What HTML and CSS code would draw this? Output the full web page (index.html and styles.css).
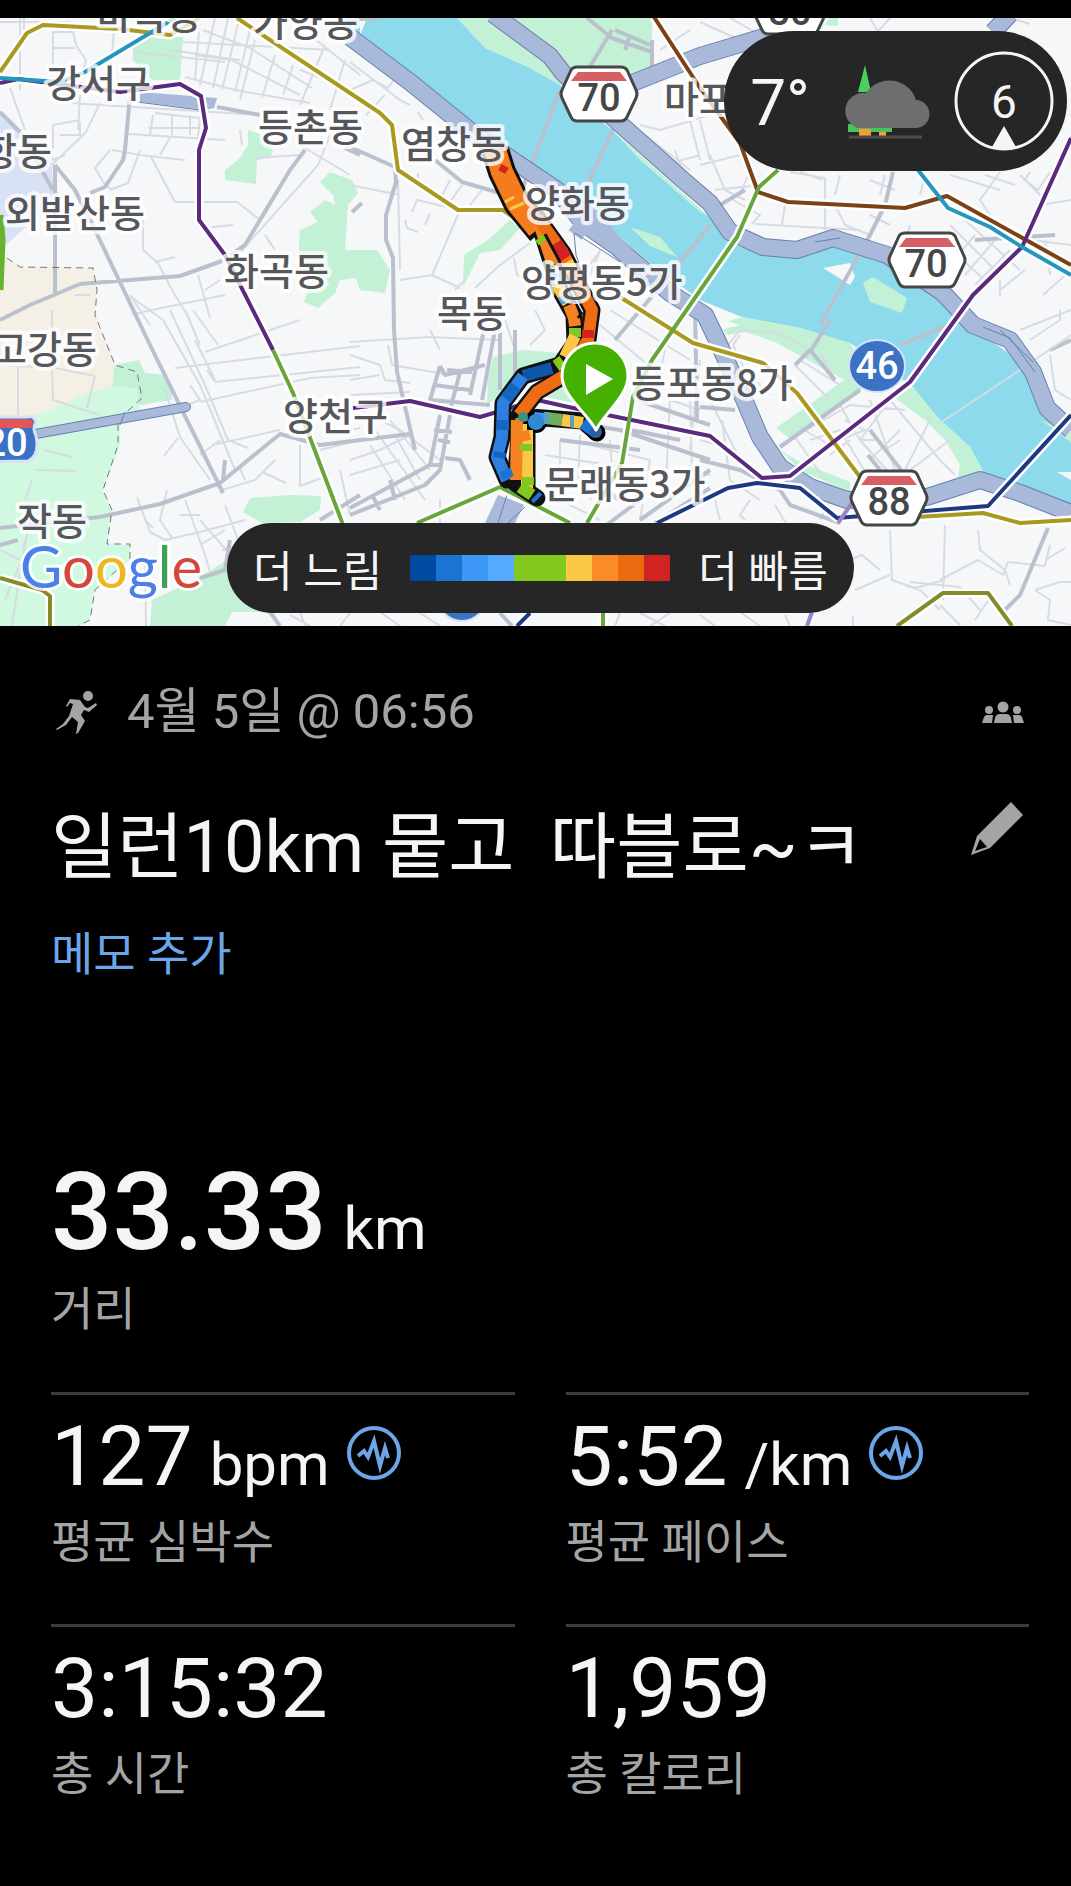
FILE: index.html
```html
<!DOCTYPE html>
<html lang="ko">
<head>
    <meta charset="UTF-8">
    <meta name="viewport" content="width=device-width, initial-scale=1.0">
    <title>일런10km</title>
    <link rel="stylesheet" href="styles.css">
</head>
<body>
    <div class="map">
        <svg class="map-canvas" viewBox="0 18 1071 608" role="img" aria-label="지도">
            <!-- land use -->
            <g class="park">
                <path d="M457 18H652V68L637 80L612 100L560 85L530 68L485 48Z"/>
                <path d="M133 37H183L180 80L152 80L133 60Z"/>
                <path d="M248 130L262 135L273 150L270 158L257 160L256 184L225 180V170L240 158L248 145Z"/>
                <path d="M330 172L352 180L358 193L348 205L345 250H377L390 270L385 293L360 290L356 278L340 280L335 293L318 308L304 302L308 290L330 285L298 260L300 230L318 222L310 212L325 200L335 205L333 195L320 182Z"/>
                <path d="M510 220L521 227L500 250L480 253L463 287L464 255L488 240Z"/>
                <path d="M493 357L523 350L563 353L550 372L520 380L487 405L488 380Z"/>
                <path d="M590 410L556 380L530 395L520 400Z"/>
                <path d="M150 626L152 600L195 580L227 560L240 600L260 612L232 612L225 626Z"/>
                <path d="M243 512L250 498L290 495L321 496L320 510L300 522L262 523Z"/>
                <path d="M115 365L139 360L145 373L165 375L172 390V400L140 405L110 390Z"/>
                <path d="M829 18L838 18L838 26L825 25Z"/>
            </g>
            <path class="town" d="M0 258H7L20 267L93 268L97 290L95 315L115 362L112 388L60 410L0 425Z"/>
            <path class="park-light" d="M0 426L45 412L90 392L113 386L137 388L140 410L120 420V445L103 490L112 510L107 544L130 545L130 560L95 590L90 620L80 626H0Z"/>
            <path class="airport" d="M0 112L25 135L52 163L53 185L60 195L25 228L0 250Z"/>

            <!-- river -->
            <path class="water" d="M367 18H457L485 48L530 68L560 85L612 130L690 200L710 218L730 243L760 255L790 258L847 243L888 262L940 288L967 320L983 335L1007 352L1033 383L1047 420L1071 440V512L1023 490L983 472L970 447L937 417L913 387L850 343L800 328L742 317L700 300L650 263L603 227L570 195L513 157L477 128L357 43Z"/>
            <path class="water" d="M352 30L360 18H350ZM345 18H360L360 40L352 34Z"/>
            <g class="park">
                <path d="M717 325L742 317L800 328L850 343L868 372L850 383L775 342L745 332L728 335Z"/>
                <path d="M913 387L937 417L970 447L983 470L957 480L960 465L945 440L925 420L895 398Z"/>
                <path d="M776 428L850 376L866 386L792 440Z"/>
                <path d="M780 450L800 470L850 492L850 482L800 462Z"/>
                <path d="M630 227L660 237L677 257L650 246Z"/>
                <path d="M863 283L873 277L907 298L902 313L870 302Z"/>
                <path d="M598 217L650 263L668 285L640 268L612 243Z"/>
                <path d="M612 130L690 200L708 216L700 212L640 160Z"/>
                <path d="M1040 420L1055 430L1071 443V432Z"/>
            </g>
            <path class="land" d="M823 268L850 263L855 277L850 285ZM1057 472H1071V480ZM700 313L740 325L720 330Z"/>

            <!-- streets -->
            <path class="street" d="M0 22H70M20 18V90M24 18V40M53 32H73L76 45L86 60L84 68M53 32V72M53 48H75M115 20L110 75M135 52L225 62M183 42L330 50M185 77L235 90L310 103M200 18L195 80M215 18L200 85M228 18L213 88M238 24L222 90M250 30L235 92M203 30L250 48L312 88M195 55L232 60L300 95M170 50L240 60M255 40L240 100M275 55L262 98M293 65L283 95M325 45L300 105M345 60L330 110M316 40L360 75M300 70L340 85M10 88L25 130M70 103L260 115M80 95L78 130M100 103L86 132L52 165M53 125L80 120M53 125V160L65 155M60 135H80V122M128 134L225 140M153 115L150 135M155 113L200 118L198 138M172 115V135M190 115V135M148 128H200M170 138L160 155M150 155L175 202L237 202L260 220M140 150L128 183L110 190M110 150L95 168L105 185L113 190M112 150L140 155L185 160M240 130L242 145M330 135L318 165L235 258M300 145L350 175M255 158L300 155M143 220V250L158 263L172 290L190 320M155 262L175 257M212 227L233 225M265 235L275 250M198 275L210 318M130 295L150 325M132 314L225 295M205 290L220 280M55 280V290M75 295H90"/>
            <path class="street" d="M0 365L55 368L95 376M18 365V420M52 370L53 400L100 415M52 310V368M44 450L72 457M35 470L76 471M95 376L87 408M130 296L163 320L200 385L235 470M170 310L205 385L228 440L248 448M193 310L218 345M185 310L200 345M205 352L300 320M175 368L360 346M207 370L215 382L360 367M200 402L310 378L360 375M195 340L215 380M212 445L280 430M165 390L180 437L210 480M178 438L164 456M200 455L220 440M300 445V486L330 475M222 490L255 480L275 460M245 480L240 468M262 472L286 483M137 497L150 532L165 540L200 532L245 520M180 515L200 515M167 490L160 520L172 538M185 500L205 555L210 572M200 520L235 560M225 505L240 545L222 550M200 545L225 530M145 520L153 528M25 500L32 480M30 520L22 560L5 600M0 550L20 560M145 560L146 626M12 626L25 540M175 410L200 400L190 385M340 470L350 515M320 450L360 440M328 435L360 428"/>
            <path class="street" d="M350 62L400 100L410 105M350 90L373 80L388 88L395 78M366 115L385 95M418 112L423 120M398 180L400 270M350 185L400 195M412 212L417 200L460 210L432 275L460 288M400 280L432 275M405 220L407 228L418 232M430 213L425 225M440 200L450 180M450 202L462 185M470 205L482 190M418 173V180M475 288L500 265L530 243M600 252L585 270M600 250L590 275M455 290L465 280M514 258L517 275L530 280M350 342L430 337L500 340M350 355L380 365L385 380L410 383M350 380L380 375M430 330L440 350M350 395L410 392M388 345L392 365L450 375M360 410L400 430L440 460M370 445L405 500M395 435L420 480M350 475L400 460M375 430L425 500M440 500V523M350 460L380 450L410 435M390 420L430 470M535 310L545 330L530 345M505 320L515 350M575 335V355M600 325L660 375M610 310L690 360M650 360L630 400M665 350L655 395M700 360L690 450M590 445L650 460L640 520M580 435L578 480M560 440L560 480L620 500M545 455L640 470M600 470L590 500M610 440L612 470M640 430L680 440M655 395L700 410M670 400L665 500M690 390L692 470L710 475M620 430L710 460M560 500L600 520"/>
            <path class="street" d="M660 50L690 30M640 125L660 130L710 115M645 135L690 170M665 165L700 155M690 120L700 160M675 150L685 180M650 140L700 185M700 120L710 160M710 155L725 190L745 200M700 165L740 155M733 200L760 215L752 224M715 190L760 185M748 175L740 195M790 172L825 178L825 230M800 172L823 180M840 175L835 195M755 224L860 230M785 205L782 225M835 205L845 225L870 235M870 180L895 190M885 175L880 195M870 215L890 225M910 225L905 245M925 175L920 195M1000 172L980 200L1000 230M1020 175L1045 200M985 175L1015 185M950 175L1000 190M1030 172L1025 180L1038 190L1050 172M1060 155L1071 150M1040 205L1071 200M950 225L1000 275M965 220L1020 270M940 240L985 280M975 235L950 265M995 240L965 275M1010 250L975 285M1000 280V296M1025 270L1000 290M1043 295L1071 270M1030 240L1071 245M1045 240L1050 275M1020 330L1071 310M1030 340L1060 320V310M1050 355L1055 390L1071 400M870 18L880 35M890 18L870 40M740 40L700 22M730 18L760 35M1010 18L1030 24"/>
            <path class="street" d="M728 345L740 330L780 333L810 350M740 335L733 345L745 370L770 395M795 365L830 400M800 360L840 385M820 352L835 380M780 445L850 405L905 410M795 425L830 445L790 470M790 430L825 480M810 440L840 430L870 480M840 405L860 440L900 485M870 400L895 470M890 400L940 460L955 475M905 380L860 440L875 440M830 455L850 440M885 450L900 440M930 420L890 500M950 440L910 470M900 430L870 460M845 420L865 430L840 440L850 430M710 400L730 440L745 470M700 440L735 450M700 460L740 470M722 420L730 480L760 500M775 505L790 530M830 500L820 520M715 500L720 520M750 500L740 515L745 520M890 530L892 580L915 588L945 580M945 525L943 600M978 530L980 550L1005 570L1010 585M905 585L920 590L940 610M910 582L960 587L980 610M940 580L978 560L1003 575L1008 562L1045 566L1050 545M1035 590L1060 582H1071M1035 590L1050 600L1048 620L1071 625M850 560L862 555L880 570M855 590L890 575M700 615L715 626M740 612L760 626M785 615L790 626M853 616V626M380 612L400 626M420 613L440 626M620 613L615 626M640 613L665 626M650 626L670 613M290 615L310 626M300 612L305 626M350 613L340 626M940 605L960 625M990 598L975 620M1045 560L1065 548"/>
            <path class="avenue" d="M352 212L362 203M130 97L125 150L123 160L105 187L90 193M0 112L20 132L53 190M55 165V295M55 165L75 190L95 230L150 345L223 493M0 320L30 305L80 284L180 276L222 261M222 261L245 245L290 170L305 150M217 107L260 115M350 147L395 167L396 182L386 215V240L393 258L394 330L397 372L415 450M397 180L392 195M435 160L462 182L500 193M0 528L100 517L160 504L220 483L280 434L320 445L410 434M225 460L223 480M200 578L225 570L230 540M345 148L360 155M320 520L360 495M0 545L18 540M440 366L445 375L485 365M440 366L430 400L490 405M447 370L472 372M435 385L470 390M484 330L470 395M495 330L482 400M460 372L450 410M440 415L430 465L350 508M450 415L440 470L425 485L350 515M430 465H442M445 458L460 460L470 480M372 495L380 510M390 480L395 500M438 440L450 442M434 430L452 432M500 330V390M515 330V400M345 20L380 18M587 18L612 38L652 52M585 75L612 30M615 30L650 45M630 35L625 50M652 40V75M560 90L520 195M615 125L585 190M710 225L670 275L615 340M670 275L640 290M637 400L710 425M555 420L620 430L710 460M630 430L680 440M560 440L640 450M893 172L885 205L870 235L820 325M640 520L710 470M655 523L710 488M600 530L640 500M695 310L697 420M620 500L590 480M1048 528L1020 595L1005 610M965 318L900 345M810 350L835 380M780 447L860 390M870 430L905 475M868 455L880 470M830 320L810 352M810 350L795 365M700 407L735 410M700 460L740 470L780 490L790 505L840 523M1071 340L1050 350M720 205L745 190M975 240L1055 235M270 612L280 626M500 613L512 626"/>
            <path class="street" d="M937 425L1020 370L1071 335"/>
            <path class="bound" d="M7 258L20 267L93 268L97 290L95 315L105 340L115 365L137 372L142 398L118 420V445L103 490L112 510L107 544H130V558L95 590L90 620L78 626"/>

            <!-- motorways -->
            <path class="motor-edge" d="M350 37L410 82L473 133L517 163L557 190L583 223L617 247L670 293L705 315L717 340L743 397L760 437L780 467L810 487L847 500L927 497L980 480L1020 493L1071 513"/>
            <path class="motor" d="M350 37L410 82L473 133L517 163L557 190L583 223L617 247L670 293L705 315L717 340L743 397L760 437L780 467L810 487L847 500L927 497L980 480L1020 493L1071 513"/>
            <path class="motor-edge" d="M493 14L550 56L563 73L627 130L683 180L710 203L730 232L763 247L797 250L833 238L887 255L943 293L973 325L1010 340L1033 372L1047 408L1071 430"/>
            <path class="motor" d="M493 14L550 56L563 73L627 130L683 180L710 203L730 232L763 247L797 250L833 238L887 255L943 293L973 325L1010 340L1033 372L1047 408L1071 430"/>
            <path class="motor" d="M557 192L590 215L615 243L650 280M575 235L590 215"/>
            <path class="motor-line" d="M574 233L576 255L583 275M815 242L840 238M983 327L1010 338L1035 372M1000 330L1033 362M575 233L617 260L650 282"/>
            <path class="motor-edge" d="M625 86L700 56L780 32M993 32L1010 14"/>
            <path class="motor" d="M625 86L700 56L780 32M993 32L1010 14"/>
            <path class="motor-edge thin" d="M30 435L186 407"/>
            <path class="motor thin" d="M30 435L186 407"/>
            <path class="motor-line" d="M125 412L120 425"/>
            <path class="motor-fill" d="M140 92L205 97L217 98L214 108L205 110L140 102Z"/>
            <path class="motor-fill" d="M498 495L485 523H515L524 505L512 500Z"/>
            <path class="motor-line" d="M507 495L498 523M525 507L508 523M137 102L200 110"/>

            <!-- subway -->
            <g class="casing">
                <path d="M0 72L27 33L43 25L120 29L170 35L200 18M237 18L350 93L380 113L392 125L398 170L458 210H503L545 240M620 297L693 343L763 363L797 393L860 477M900 518L983 513L1020 523L1071 520"/>
                <path d="M0 78L60 82L85 72L175 18M918 170L948 208L990 227L1022 247L1071 275"/>
                <path d="M0 83L18 79L120 92L180 84L201 96L206 128L199 150V220L225 255L273 350L293 393L345 530M353 408L410 401L480 417L537 400L710 436L762 478L790 476L910 382L973 295L1022 247L1071 138"/>
                <path d="M778 170L759 187L737 237L652 360L633 397L622 463L587 523M417 523L500 487L570 523M603 613V626"/>
                <path d="M654 17L700 88L740 143L758 192L788 202L905 208L947 196L1071 265"/>
                <path d="M657 523L728 488L757 483L800 488L837 518L988 506L1071 415M517 626L530 613"/>
                <path d="M0 578L42 590L50 596V626M897 626L943 593H988L1012 626"/>
            </g>
            <g class="subway">
                <path stroke="#a89a20" d="M0 72L27 33L43 25L120 29L170 35L200 18M237 18L350 93L380 113L392 125L398 170L458 210H503L545 240M620 297L693 343L763 363L797 393L860 477M900 518L983 513L1020 523L1071 520"/>
                <path stroke="#7a4216" d="M654 17L700 88L740 143L758 192L788 202L905 208L947 196L1071 265"/>
                <path stroke="#5a2a7d" d="M0 83L18 79L120 92L180 84L201 96L206 128L199 150V220L225 255L273 350M353 408L410 401L480 417L537 400L573 408L710 436L762 478L790 476L910 382L973 295L1022 247L1071 138"/>
                <path stroke="#2596be" d="M0 78L60 82L85 72L175 18M918 170L948 208L990 227L1022 247L1071 275"/>
                <path stroke="#68a63c" d="M273 350L293 393L345 530M778 170L759 187L737 237L652 360L633 397L622 463L587 523M417 523L500 487L570 523M603 613V626"/>
                <path stroke="#1d3a80" d="M657 523L728 488L757 483L800 488L837 518L988 506L1071 415M517 626L530 613"/>
                <path stroke="#858a2a" d="M0 578L42 590L50 596V626M897 626L943 593H988L1012 626"/>
                <path stroke="#9a86c8" d="M852 503L838 523M812 612L807 626"/>
                <path stroke="#68b32e" stroke-width="7" d="M0 215L2 240L0 290"/>
            </g>

            <!-- recorded route -->
            <g class="route">
                <path class="route-edge wide" d="M495 150L502 172L517 203L541 232"/>
                <path class="route-edge" d="M537 217L550 258L560 290L574 315L575 343L560 365L523 376L503 403L502 437L497 457L507 480"/>
                <path class="route-edge" d="M537 217L563 253L580 287L592 310L588 340L567 374L537 392L519 415L518 450L515 483L537 498M527 430L527 490M530 417L583 421L597 433"/>
                <circle cx="536" cy="422" r="11"/>
                <circle cx="596" cy="432" r="9"/>
                <g class="route-line">
                    <path class="wide" stroke="#f47c1c" d="M495 150L502 172L517 203L538 229"/>
                    <path stroke="#f58220" d="M537 217L547 247L553 265"/>
                    <path stroke="#fac846" d="M553 268L560 290L568 303"/>
                    <path stroke="#5aa0d8" d="M554 272L558 284M563 295L567 302"/>
                    <path stroke="#f58220" d="M569 305L574 318L575 326"/>
                    <path stroke="#82c81e" d="M575 328V337M563 361L556 366"/>
                    <path stroke="#fac846" d="M575 336L565 357"/>
                    <path stroke="#0f56a8" d="M552 368L523 376"/>
                    <path stroke="#2e7fe0" d="M523 376L503 403L502 437L497 457L507 480"/>
                    <path stroke="#1566c0" d="M516 386L506 399M503 420V430M500 452L499 458"/>
                    <path stroke="#ee6c14" d="M541 222L563 253L580 287L592 310L588 340L567 374L537 392L519 415"/>
                    <path stroke="#d22222" d="M556 243L566 258M588 330L588 338"/>
                    <path stroke="#fac846" d="M567 262L572 270M527 430L527 490"/>
                    <path stroke="#3c96f5" d="M534 418L545 419"/>
                    <path stroke="#6fae5a" d="M546 418L562 420M521 417L522 422"/>
                    <path stroke="#fac846" d="M562 420L583 423M521 424V430"/>
                    <path stroke="#57a0c0" d="M544 418L549 418M570 421L574 421"/>
                    <path stroke="#f58220" d="M517 420L516 480M523 431L525 441"/>
                    <path stroke="#82c81e" d="M526 444V451M528 477V485M520 487L532 495"/>
                    <path stroke="#1b73d2" d="M583 423L597 433M535 496L538 499M505 470L508 478"/>
                </g>
                <circle cx="536" cy="422" r="8" fill="#2f8ad0"/>
                <circle cx="523" cy="417" r="5" fill="#3f8f8a"/>
                <circle cx="596" cy="432" r="6" fill="#2a5f9c"/>
                <path stroke="#d22222" stroke-width="7" d="M500 167L507 171"/>
                <path stroke="#82c81e" stroke-width="6" d="M537 243L546 236"/>
                <path stroke="#fac846" stroke-width="3" d="M505 202L514 197M510 209L524 203"/>
                <path stroke="#111" stroke-width="3" fill="none" d="M545 234L560 262M578 318L582 312"/>
            </g>

            <!-- place names -->
            <g class="place">
                <text x="97" y="29">마곡동</text>
                <text x="253" y="36">가양동</text>
                <text x="46" y="97">강서구</text>
                <text x="258" y="141">등촌동</text>
                <text x="-18" y="165">항동</text>
                <text x="5" y="227">외발산동</text>
                <text x="224" y="285">화곡동</text>
                <text x="401" y="158">염창동</text>
                <text x="525" y="217">양화동</text>
                <text x="521" y="296">양평동5가</text>
                <text x="437" y="327">목동</text>
                <text x="664" y="113">마포</text>
                <text x="-8" y="363">고강동</text>
                <text x="283" y="430">양천구</text>
                <text x="17" y="535">작동</text>
                <text x="631" y="397">등포동8가</text>
                <text x="544" y="498">문래동3가</text>
            </g>

            <!-- road shields -->
            <defs>
                <g id="hex">
                    <path d="M-22 -27H22Q26 -27 28 -24L37 -4Q39 0 37 4L28 23Q26 27 22 27H-22Q-26 27 -28 23L-37 4Q-39 0 -37 -4L-28 -24Q-26 -27 -22 -27Z" fill="#fff" stroke="#444648" stroke-width="3"/>
                    <path d="M-21 -22H21L28 -13H-28Z" fill="#d65f63"/>
                </g>
            </defs>
            <use href="#hex" x="599" y="94"/>
            <use href="#hex" x="927" y="260"/>
            <use href="#hex" x="889" y="498"/>
            <use href="#hex" x="790" y="7"/>
            <g class="shield-text">
                <text x="599" y="111">70</text>
                <text x="926" y="277">70</text>
                <text x="889" y="515">88</text>
                <text x="790" y="25">30</text>
            </g>
            <ellipse cx="877" cy="366" rx="28" ry="26" fill="#3b72c4" stroke="#d5e3fa" stroke-width="2"/>
            <circle cx="462" cy="597" r="24" fill="#3b72c4" stroke="#d5e3fa" stroke-width="2"/>
            <path d="M-30 417L28 417Q33 415 36 422Q32 428 36 436Q40 455 28 461L-30 462Z" fill="#3b72c4" stroke="#d5e3fa" stroke-width="3"/>
            <path d="M-30 419H27L34 421L31 428H-30Z" fill="#e0585c"/>
            <g class="shield-text light">
                <text x="877" y="379">46</text>
                <text x="6" y="456">20</text>
            </g>

            <!-- start pin -->
            <path d="M596 430C588 414 562 396 562 376A33 33 0 0 1 628 376C628 396 604 414 596 430Z" fill="#46b000" stroke="#fff" stroke-width="3"/>
            <path d="M586 364V395L613 379Z" fill="#fff"/>

            <text class="google" x="20" y="588"><tspan fill="#4a80e8">G</tspan><tspan fill="#d8453a">o</tspan><tspan fill="#efb71f">o</tspan><tspan fill="#4a80e8">g</tspan><tspan fill="#3ea256">l</tspan><tspan fill="#d8453a">e</tspan></text>
        </svg>

        <div class="weather">
            <span class="temp">7°</span>
            <svg class="cloud" viewBox="0 0 90 76" width="90" height="76">
                <path d="M25 0L31 27H18Z" fill="#4bd05f"/>
                <path d="M8 59H52V67H8Z" fill="#4bc35c"/>
                <path d="M19 64H31V71H19ZM39 67H46V71H39Z" fill="#f39c3c"/>
                <path d="M18 63A18 18 0 0 1 26 28A28 28 0 0 1 76 35A14 14 0 0 1 75 63Z" fill="#6e6e6e"/>
                <path d="M9 72H82" stroke="#4c4c4c" stroke-width="3"/>
            </svg>
            <svg class="wind" viewBox="0 0 100 100" width="100" height="100">
                <circle cx="50" cy="50" r="48" fill="none" stroke="#f5f5f5" stroke-width="3"/>
                <path d="M50 75L62 96Q50 101 38 96Z" fill="#f5f5f5"/>
                <text x="50" y="67">6</text>
            </svg>
        </div>

        <div class="legend">
            <span>더 느림</span>
            <div class="scale">
                <i class="s1"></i><i class="s2"></i><i class="s3"></i><i class="s4"></i><i class="s5"></i>
                <i class="s5"></i><i class="s6"></i><i class="s7"></i><i class="s8"></i><i class="s9"></i>
            </div>
            <span>더 빠름</span>
        </div>
    </div>

    <main class="details">
        <div class="meta">
            <svg class="runner" viewBox="0 0 41 43" width="41" height="43">
                <circle cx="32" cy="5" r="5"/>
                <path d="M14 8L24 9L29 16L32 17L40 12L41 14L33 21L28 19L25 24L29 30L22 42L20 43L22 31L16 26L10 34L1 39L0 38L7 33L13 25L17 13L14 12L11 16L10 15Z"/>
            </svg>
            <span class="date">4월 5일 @ 06:56</span>
            <svg class="group" viewBox="0 0 42 22" width="42" height="22">
                <circle cx="21" cy="6" r="5.500"/>
                <circle cx="7" cy="9" r="4"/>
                <circle cx="35" cy="9" r="4"/>
                <path d="M12 22L13 17Q14 13 18 13H24Q28 13 29 17L30 22ZM0 22L2 16Q3 14 5 14H11L10 22ZM42 22L40 16Q39 14 37 14H31L32 22Z"/>
            </svg>
        </div>

        <div class="title-row">
            <h1>일런10km 뭍고&nbsp; 따블로~ㅋ</h1>
            <button type="button" class="edit" aria-label="편집">
                <svg viewBox="0 0 52 54" width="52" height="54">
                    <path d="M40 1L52 14L19 47L0 54L6 35ZM9 38L4 50L16 46Z" fill-rule="evenodd"/>
                </svg>
            </button>
        </div>
        <button type="button" class="memo">메모 추가</button>

        <div class="distance">
            <p class="value big">33.33 <small>km</small></p>
            <p class="label">거리</p>
        </div>

        <div class="stats">
            <div class="stat">
                <p class="value">127 <small>bpm</small>
                    <button type="button" class="wave" aria-label="그래프"><svg viewBox="0 0 54 54" width="54" height="54"><circle cx="27" cy="27" r="25"/><path d="M11 30L17 25L21 31L27 15L33 40L38 22L41 32"/></svg></button>
                </p>
                <p class="label">평균 심박수</p>
            </div>
            <div class="stat">
                <p class="value">5:52 <small>/km</small>
                    <button type="button" class="wave" aria-label="그래프"><svg viewBox="0 0 54 54" width="54" height="54"><circle cx="27" cy="27" r="25"/><path d="M11 30L17 25L21 31L27 15L33 40L38 22L41 32"/></svg></button>
                </p>
                <p class="label">평균 페이스</p>
            </div>
            <div class="stat">
                <p class="value">3:15:32</p>
                <p class="label">총 시간</p>
            </div>
            <div class="stat">
                <p class="value">1,959</p>
                <p class="label">총 칼로리</p>
            </div>
        </div>
    </main>
</body>
</html>
```
FILE: styles.css
```css
* {
    box-sizing: border-box;
}
body {
    margin: 0;
    padding-top: 18px;
    background: #000;
    color: #f5f5f5;
    font-family: Roboto, "Noto Sans CJK KR", sans-serif;
}
h1, p {
    margin: 0;
    font-weight: 400;
}
button {
    padding: 0;
    border: none;
    background: none;
    font: inherit;
    cursor: pointer;
}
svg {
    display: block;
}

/* map */
.map {
    position: relative;
}
.map-canvas {
    width: 100%;
    height: auto;
    background: #f6f7f9;
}
.map-canvas path {
    stroke-linejoin: round;
}
.park { fill: #c2f1d5; }
.park-light { fill: #d1f8e1; }
.town { fill: #f5f0e6; }
.airport { fill: #d9e1f4; }
.water { fill: #8edaed; }
.land { fill: #f6f7f9; }
.street, .avenue, .bound, .motor, .motor-edge, .motor-line, .casing, .subway {
    fill: none;
}
.street {
    stroke: #d7dbe3;
    stroke-width: 2;
}
.avenue {
    stroke: #bac0cd;
    stroke-width: 4;
}
.bound {
    stroke: #777;
    stroke-width: 1;
    stroke-dasharray: 7 5;
}
.motor-edge {
    stroke: #687fae;
    stroke-width: 18;
}
.motor {
    stroke: #a9b9d9;
    stroke-width: 16;
}
.motor-edge.thin {
    stroke-width: 10;
    stroke-linecap: round;
}
.motor.thin {
    stroke-width: 8;
    stroke-linecap: round;
}
.motor-line {
    stroke: #687fae;
    stroke-width: 1;
}
.motor-fill {
    fill: #a9b9d9;
}
.casing {
    stroke: #fff;
    stroke-width: 9;
}
.subway {
    stroke-width: 4;
}
.route-edge {
    fill: none;
    stroke: #111;
    stroke-width: 17;
    stroke-linecap: round;
}
.route-line {
    fill: none;
    stroke-width: 12;
}
.route-edge.wide {
    stroke-width: 28;
    stroke-linecap: butt;
}
.route-line .wide {
    stroke-width: 22;
}
.place {
    font-family: "Noto Sans CJK KR", sans-serif;
    font-size: 38px;
    font-weight: 500;
    fill: #55575b;
    stroke: rgba(255, 255, 255, 0.8);
    stroke-width: 8px;
    stroke-linejoin: round;
    paint-order: stroke;
}
.shield-text {
    font-size: 38px;
    font-weight: 500;
    fill: #444648;
    text-anchor: middle;
}
.shield-text.light {
    fill: #fff;
}
.google {
    font-family: Lato, sans-serif;
    font-size: 58px;
    stroke: rgba(255, 255, 255, 0.8);
    stroke-width: 6px;
    paint-order: stroke;
}

.weather {
    position: absolute;
    top: 13px;
    right: 4px;
    display: flex;
    align-items: center;
    gap: 24px;
    height: 140px;
    padding: 4px 13px 0 26px;
    border-radius: 70px;
    background: #262626;
}
.temp {
    font-size: 64px;
    margin-right: 6px;
}
.wind {
    margin-top: -4px;
}
.wind text {
    font-size: 46px;
    fill: #f5f5f5;
    text-anchor: middle;
}
.legend {
    position: absolute;
    bottom: 13px;
    left: 227px;
    display: flex;
    align-items: center;
    gap: 28px;
    height: 90px;
    padding: 0 26px;
    border-radius: 45px;
    background: #262626;
    font-size: 43px;
    white-space: nowrap;
}
.scale {
    display: flex;
}
.scale i {
    width: 26px;
    height: 26px;
}
.s1 { background: #0049a0; }
.s2 { background: #1b73d2; }
.s3 { background: #3c96f5; }
.s4 { background: #55aaff; }
.s5 { background: #82c81e; }
.s6 { background: #fac846; }
.s7 { background: #fa8c28; }
.s8 { background: #eb690f; }
.s9 { background: #d22222; }

/* details */
.details {
    padding: 52px 42px 80px 51px;
}
.meta {
    display: flex;
    align-items: center;
    padding: 0 5px;
    color: #a4a4a4;
    font-size: 49px;
    line-height: 68px;
}
.meta svg, .edit svg {
    fill: #a4a4a4;
}
.date {
    flex: 1;
    margin-left: 30px;
}
.title-row {
    display: flex;
    justify-content: space-between;
    align-items: flex-start;
    margin-top: 55px;
    padding-right: 6px;
}
h1 {
    font-size: 72px;
    line-height: 94px;
}
.memo {
    display: block;
    margin-top: 29px;
    color: #6ca6e8;
    font-size: 46px;
    line-height: 60px;
}
.distance {
    margin-top: 168px;
}
.value {
    display: flex;
    align-items: baseline;
    gap: 17px;
    font-size: 84px;
    line-height: 96px;
}
.value small {
    font-size: 60px;
    font-weight: 400;
    line-height: 60px;
}
.value.big {
    font-size: 108px;
    font-weight: 500;
    line-height: 120px;
}
.label {
    margin-top: 10px;
    color: #a4a4a4;
    font-size: 46px;
    line-height: 54px;
}
.stats {
    display: grid;
    grid-template-columns: 1fr 1fr;
    gap: 55px 51px;
    margin-top: 56px;
}
.stat {
    padding-top: 14px;
    border-top: 3px solid #3c3c3c;
}
.wave {
    align-self: center;
    margin-bottom: 8px;
}
.wave svg {
    fill: none;
    stroke: #6ca6e8;
    stroke-width: 4;
}
```
